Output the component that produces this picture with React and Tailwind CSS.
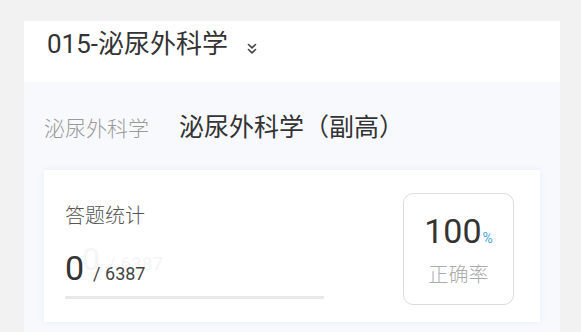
import { useState } from 'react';

const font = { fontFamily: 'Roboto, "Noto Sans CJK SC", sans-serif' };

function DoubleChevron() {
    return (
        <svg width="10" height="12" viewBox="0 0 10 12" fill="none" className="ml-[19px] mt-[12px]">
            <path d="M1.5 1.5 L5 4.8 L8.5 1.5" stroke="#444" strokeWidth="1.6" strokeLinecap="round" strokeLinejoin="round" />
            <path d="M1.5 6.5 L5 9.8 L8.5 6.5" stroke="#444" strokeWidth="1.6" strokeLinecap="round" strokeLinejoin="round" />
        </svg>
    );
}

export default function App() {
    const [stats] = useState({ done: 0, total: 6387, rate: 100 });

    return (
        <div className="min-h-[332px] bg-[#f2f2f2] pt-[21px] pl-[24px] pr-[21px] overflow-hidden" style={font}>
            <div className="bg-white">
                {/* Header */}
                <div className="flex h-[61px] items-start pl-[23px] pt-[10px]">
                    <span className="text-[26px] leading-[26px] text-[#333]">015-泌尿外科学</span>
                    <DoubleChevron />
                </div>

                {/* Subject section */}
                <div className="bg-[#f7f9fd] px-[20px] pb-[20px]">
                    <div className="flex items-baseline pt-[32px] pb-[27px]">
                        <span className="text-[21px] leading-[28px] font-light text-[#9a9a9a]">泌尿外科学</span>
                        <span className="ml-[30px] text-[25px] leading-[28px] text-[#333]">泌尿外科学（副高）</span>
                    </div>

                    {/* Stats card */}
                    <div className="flex h-[152px] items-start justify-between bg-white pl-[21px] pr-[26px] pt-[23px] shadow-[0_0_6px_rgba(200,215,240,0.35)]">
                        <div className="relative w-[259px] pt-[12px]">
                            <div className="text-[20px] leading-[22px] font-light text-[#555]">答题统计</div>
                            <div className="relative mt-[24px] flex items-baseline">
                                <div className="pointer-events-none absolute left-[17px] top-[-8px] flex items-baseline text-[#f5f5f5]">
                                    <span className="text-[32px] leading-[32px]">0</span>
                                    <span className="ml-[8px] text-[19px] leading-[20px]">/ 6387</span>
                                </div>
                                <span className="relative text-[34px] leading-[34px] text-[#333]">{stats.done}</span>
                                <span className="relative ml-[9px] text-[18px] leading-[20px] text-[#444]">/ {stats.total}</span>
                            </div>
                            <div className="mt-[11px] h-[3px] w-full bg-[#e8e8e8]" />
                        </div>

                        <div className="flex h-[112px] w-[111px] flex-col items-center rounded-[10px] border border-[#dcdcdc] pt-[19px]">
                            <div className="flex items-baseline">
                                <span className="text-[34px] leading-[36px] text-[#333]">{stats.rate}</span>
                                <span className="ml-[1px] text-[14px] leading-[14px] text-[#4aa3dc]">%</span>
                            </div>
                            <div className="mt-[15px] text-[20px] leading-[22px] font-light text-[#aaa]">正确率</div>
                        </div>
                    </div>
                </div>
            </div>
        </div>
    );
}
